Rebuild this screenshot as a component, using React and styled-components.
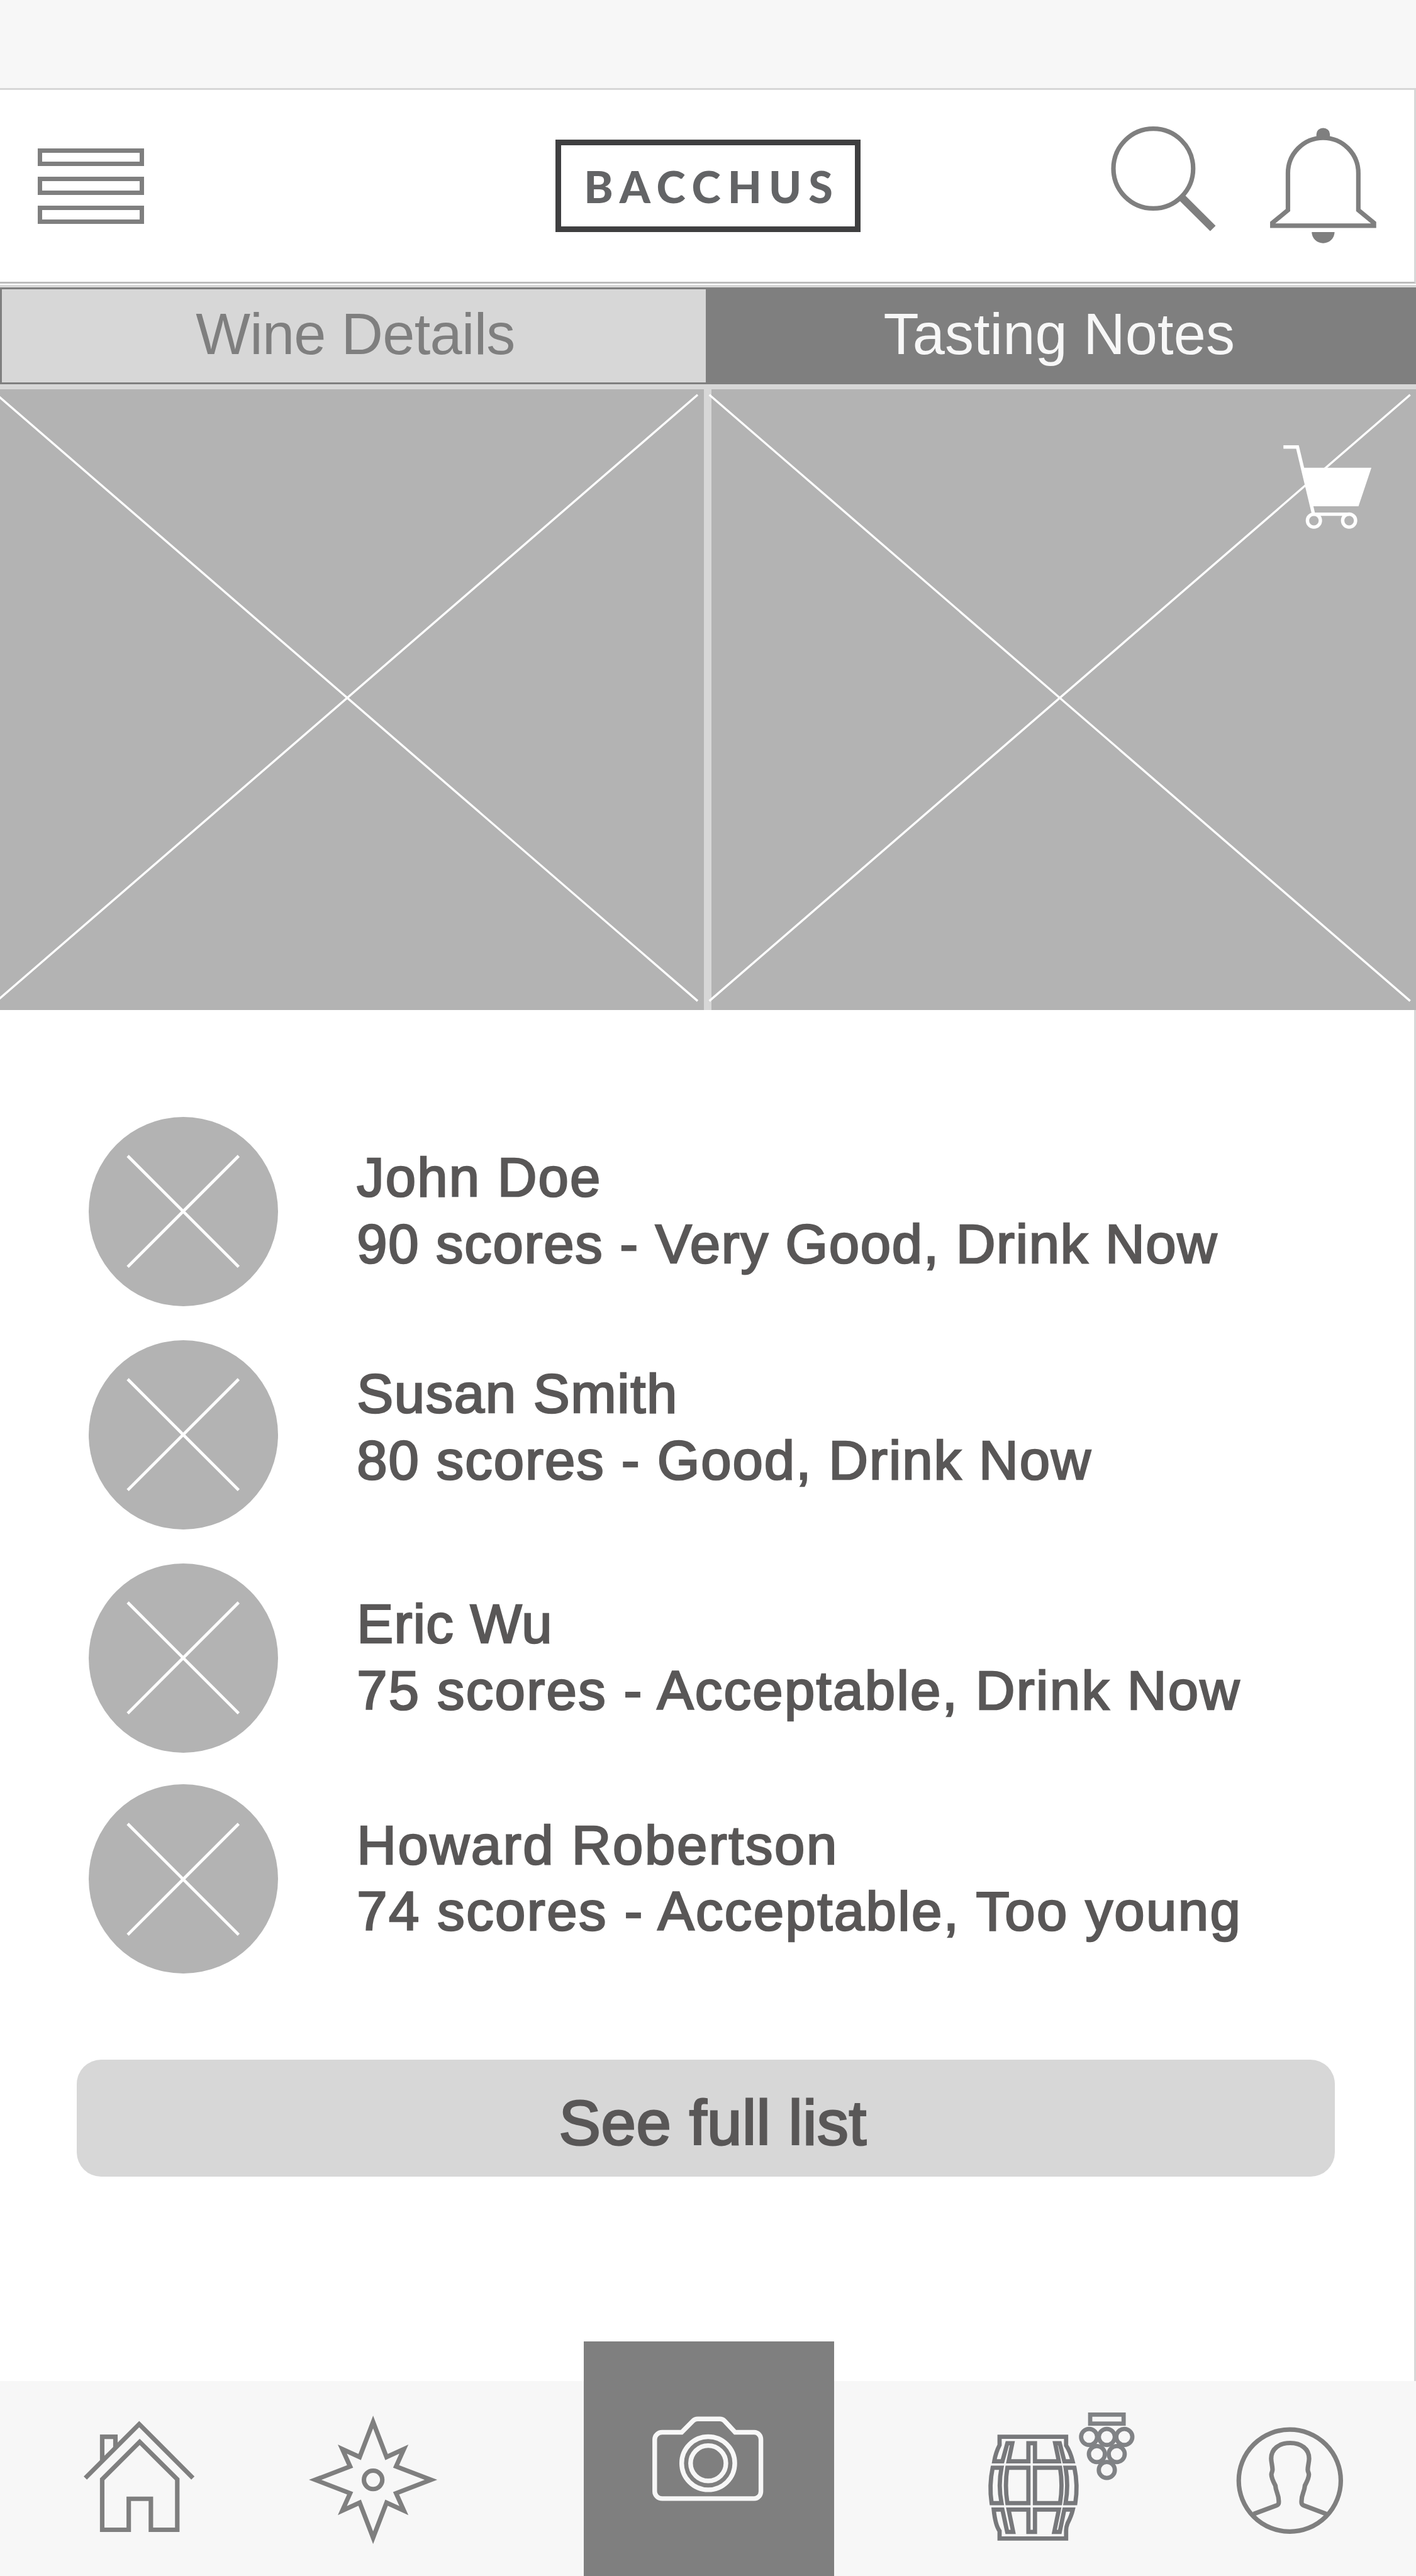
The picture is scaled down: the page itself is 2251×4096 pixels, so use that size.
import React from "react";
import styled, { createGlobalStyle } from "styled-components";

/* 1rem = 100 design units */
const GlobalStyle = createGlobalStyle`
  html {
    font-size: 84.4px;
  }
  body {
    margin: 0;
    background: #ffffff;
  }
  *, *::before, *::after {
    box-sizing: border-box;
  }
`;

const color = {
  ink: "#595757",
  mid: "#7f7f7f",
  fill: "#b3b3b3",
  light: "#d7d7d7",
  pale: "#f7f7f7",
};

const Screen = styled.div`
  display: flex;
  flex-direction: column;
  width: 100%;
  height: 4096px;
  overflow: hidden;
  background: #ffffff;
  font-family: "Liberation Sans", Arial, Helvetica, sans-serif;
`;

const StatusBar = styled.div`
  flex: none;
  height: 1.7rem;
  background: ${color.pale};
  border-bottom: 0.04rem solid ${color.light};
`;

const Header = styled.header`
  flex: none;
  display: grid;
  grid-template-columns: 1fr auto 1fr;
  align-items: center;
  height: 3.645rem;
  padding: 0 0.67rem 0 0.71rem;
  border-right: 0.04rem solid ${color.light};
  border-bottom: 0.045rem solid #bcbcbc;
`;

const Icon = styled.svg`
  display: block;
  flex: none;
  width: ${(p) => p.$w / 100}rem;
  height: ${(p) => p.$h / 100}rem;
  overflow: visible;
  fill: none;
  stroke: ${(p) => p.$stroke || color.mid};
  stroke-width: ${(p) => p.$weight || 8.5};
  stroke-miterlimit: 20;
`;

const MenuButton = styled.button`
  display: flex;
  flex-direction: column;
  gap: 0.202rem;
  width: 2rem;
  padding: 0;
  border: 0;
  background: none;
`;

const MenuBar = styled.span`
  height: 0.34rem;
  border: 0.085rem solid ${color.mid};
`;

const Logo = styled.div`
  display: flex;
  align-items: center;
  justify-content: center;
  width: 5.75rem;
  height: 1.74rem;
  padding-left: 0.14rem;
  border: 0.107rem solid #3f3f40;
  color: #636466;
  font-family: Lato, "Open Sans", sans-serif;
  font-size: 0.83rem;
  font-weight: 900;
  line-height: 1;
  letter-spacing: 0.158em;
`;

const Actions = styled.div`
  display: flex;
  justify-content: flex-end;
  gap: 1.02rem;
  margin-right: 0.045rem;
`;

const TabBar = styled.nav`
  flex: none;
  display: flex;
  height: 1.97rem;
  margin-top: 0.025rem;
  padding: 0.045rem 0 0.095rem;
  background: ${color.light};
`;

const Tab = styled.button`
  flex: ${(p) => (p.$active ? "1" : "none")};
  width: 13.29rem;
  padding: ${(p) => (p.$active ? "0 0.06rem 0.08rem 0" : "0 0 0.08rem 0.06rem")};
  border: 0.045rem solid ${color.mid};
  border-right-width: ${(p) => (p.$active ? "0.045rem" : "0")};
  background: ${(p) => (p.$active ? color.mid : color.light)};
  color: ${(p) => (p.$active ? color.pale : color.mid)};
  font-family: inherit;
  font-size: 1.09rem;
  line-height: 1.2;
  letter-spacing: ${(p) => (p.$active ? "0.001em" : "-0.008em")};
`;

const Gallery = styled.section`
  flex: none;
  display: flex;
  gap: 0.145rem;
  height: 11.685rem;
  background: ${color.light};
`;

const Tile = styled.div`
  position: relative;
  flex: ${(p) => (p.$w ? "none" : "1")};
  width: ${(p) => (p.$w ? `${p.$w}rem` : "auto")};
  background: ${color.fill};
`;

const CartButton = styled.div`
  position: absolute;
  top: 1.03rem;
  right: 0.82rem;
`;

const Main = styled.main`
  flex: 1;
  display: flex;
  flex-direction: column;
  padding-top: 2.013rem;
  border-right: 0.04rem solid ${color.light};
`;

const Review = styled.article`
  display: flex;
  align-items: flex-start;
  height: 3.57rem;
  margin: 0 0 ${(p) => p.$gap}rem 1.67rem;
`;

const Avatar = styled.div`
  display: flex;
  align-items: center;
  justify-content: center;
  width: 3.57rem;
  height: 3.57rem;
  border-radius: 50%;
  background: ${color.fill};
`;

const ReviewText = styled.div`
  padding: ${(p) => p.$lead}rem 0 0 1.48rem;
  color: ${color.ink};
  font-size: 1.03rem;
  line-height: 1.252rem;
  white-space: nowrap;
  -webkit-text-stroke: 0.03em ${color.ink};
`;

const Line = styled.p`
  margin: 0;
  letter-spacing: ${(p) => p.$track}em;
`;

const FullListButton = styled.button`
  width: 23.7rem;
  height: 2.2rem;
  margin: 0 0 0 1.445rem;
  padding: 0.19rem 0 0 0.26rem;
  border: 0;
  border-radius: 0.46rem;
  background: ${color.light};
  color: ${color.ink};
  font-family: inherit;
  font-size: 1.18rem;
  line-height: 1.2;
  letter-spacing: 0.006em;
  -webkit-text-stroke: 0.03em ${color.ink};
`;

const BottomNav = styled.nav`
  flex: none;
  display: grid;
  grid-template-columns: 5.5rem 5.5rem 4.71rem 1fr 4.7rem;
  height: 3.67rem;
  background: ${color.pale};
`;

const NavItem = styled.div`
  display: flex;
  padding-top: ${(p) => p.$top}rem;
  padding-left: ${(p) => p.$left}rem;
`;

const CameraItem = styled.div`
  display: flex;
  justify-content: center;
  height: 4.415rem;
  margin-top: -0.745rem;
  padding: 1.39rem 0.03rem 0 0;
  background: ${color.mid};
`;

const SearchIcon = () => (
  <Icon viewBox="2090 234 200 232" $w={200} $h={232}>
    <circle cx="2172.2" cy="317" r="75.1" />
    <path d="M2226 371.6L2284.5 429.8" strokeWidth="14.5" />
  </Icon>
);

const BellIcon = () => (
  <Icon viewBox="2392 234 200 232" $w={200} $h={232}>
    <path d="M2396.3 424.7V419.5L2425.7 395.2V325.5A66.3 66.3 0 0 1 2558.3 325.5V395.2L2587.7 419.5V424.7Z" />
    <path
      d="M2479.3 262V252A12.7 11.5 0 0 1 2504.7 252V262ZM2470.5 436.6H2513.5A21.5 21 0 0 1 2470.5 436.6Z"
      fill={color.mid}
      stroke="none"
    />
  </Icon>
);

const CartIcon = () => (
  <Icon viewBox="2417 837 168 162" $w={168} $h={162} $stroke="#ffffff" $weight={6.4}>
    <path d="M2417.3 842.6H2443.7L2474 969.3H2541" />
    <path d="M2455 881.8H2583L2558.7 954.3H2471.7Z" fill="#ffffff" stroke="none" />
    <circle cx="2474.7" cy="981.3" r="12.2" />
    <circle cx="2541" cy="981.3" r="12.2" />
  </Icon>
);

const TileCross = ({ x, w, from }) => (
  <Icon viewBox={`${x} 734 ${w} 1168.5`} $w={w} $h={1168.5} $stroke="#ffffff" $weight={4}>
    <path d={`M${from} 744.3L${from + 1320} 1886.4M${from} 1886.4L${from + 1320} 744.3`} />
  </Icon>
);

const AvatarCross = () => (
  <Icon viewBox="0 0 209 209" $w={209} $h={209} $stroke="#ffffff" $weight={5.6}>
    <path d="M0 0L209 209M0 209L209 0" />
  </Icon>
);

const HomeIcon = () => (
  <Icon viewBox="157 4560 210 212" $w={210} $h={212}>
    <path d="M160.1 4669.3L261.6 4567.7L362.8 4669.3" />
    <path d="M191.9 4637V4591.6H216.8V4612" />
    <path d="M191.9 4671.7L262.5 4601.2L333.3 4671.7V4766.8H283.6V4708.4H241.9V4766.8H191.9Z" />
  </Icon>
);

const CompassIcon = () => (
  <Icon viewBox="-121 -121 242 242" $w={242} $h={242}>
    <path d="M0 -109L25.3 -43L58 -58L43.3 -25.2L109 0L43.3 25.2L58 58L25.3 43L0 109L-25.3 43L-58 58L-43.3 25.2L-109 0L-43.3 -25.2L-58 -58L-25.3 -43Z" />
    <circle r="17.3" />
  </Icon>
);

const CameraIcon = () => (
  <Icon viewBox="1229 4552 210 162" $w={210} $h={162} $stroke={color.pale} $weight={8.8}>
    <path d="M1247.5 4583.4H1284.2L1305.5 4562Q1309.3 4558.3 1314.5 4558.3H1356Q1361.3 4558.3 1365 4562L1385 4583.4H1421A12.5 13.5 0 0 1 1433.5 4597V4694.8A12.5 13.5 0 0 1 1421 4708.3H1247.5A14 13.5 0 0 1 1233.5 4694.8V4597A14 13.5 0 0 1 1247.5 4583.4Z" />
    <circle cx="1334.3" cy="4641.7" r="50" />
    <circle cx="1334.3" cy="4641.7" r="33.3" />
  </Icon>
);

const CellarIcon = () => (
  <Icon viewBox="66 78 828 726" $w={276} $h={242} $stroke="#77787b" $weight={24}>
    <path d="M130 215H506V264Q530 300 543 353.5H496L470 252H444L465 353.5H330V252H293V353.5H181L202 252H174L146 353.5H100Q108 305 130 262Z" />
    <path d="M91 390H141Q121 490 141 590H85Q70 490 91 390Z" />
    <path d="M174 390H293V590H174Q158 490 174 390Z" />
    <path d="M330 390H472Q488 490 472 590H330Z" />
    <path d="M503 390H553Q574 490 558 590H503Q521 490 503 390Z" />
    <path d="M130 790H506V744Q506 725 514 705Q536 662 544 627H496L470 753H439L465 627H330V753H293V627H181L207 753H173L146 627H97Q106 715 130 748Z" />
    <g stroke="#808285">
      <rect x="642" y="90" width="189" height="51" />
      <circle cx="636" cy="216" r="45.3" />
      <circle cx="736" cy="216" r="45.3" />
      <circle cx="835" cy="216" r="45.3" />
      <circle cx="680" cy="313" r="45.3" />
      <circle cx="792" cy="313" r="45.3" />
      <circle cx="736" cy="403" r="45.3" />
    </g>
  </Icon>
);

const ProfileIcon = () => (
  <Icon viewBox="2328 4573 202 202" $w={202} $h={202}>
    <circle cx="2429.1" cy="4674" r="96.1" />
    <path d="M2361 4737L2404 4721Q2408 4719.5 2408.3 4716C2409.5 4700 2402.8 4697 2402 4683.5C2398 4676 2394.5 4668 2394.5 4662.5C2394.5 4659 2396.8 4657.5 2396.6 4653C2396.4 4646 2394.1 4639 2394.1 4632.5C2394.1 4614.5 2409 4603.2 2429.8 4603.2C2450.6 4603.2 2465.5 4614.5 2465.5 4632.5C2465.5 4639 2463.2 4646 2463 4653C2462.8 4657.5 2465.1 4659 2465.1 4662.5C2465.1 4668 2461.6 4676 2457.6 4683.5C2456.8 4697 2450.1 4700 2451.3 4716Q2451.6 4719.5 2455.6 4721L2498 4737" />
  </Icon>
);

const reviews = [
  {
    name: "John Doe",
    note: "90 scores - Very Good, Drink Now",
    track: [0.025, 0.0197],
    lead: 0.52,
    gap: 0.638,
  },
  {
    name: "Susan Smith",
    note: "80 scores - Good, Drink Now",
    track: [0.019, 0.0225],
    lead: 0.388,
    gap: 0.638,
  },
  {
    name: "Eric Wu",
    note: "75 scores - Acceptable, Drink Now",
    track: [0.015, 0.0268],
    lead: 0.515,
    gap: 0.592,
  },
  {
    name: "Howard Robertson",
    note: "74 scores - Acceptable, Too young",
    track: [0.0295, 0.0279],
    lead: 0.515,
    gap: 1.62,
  },
];

export default function App() {
  return (
    <>
      <GlobalStyle />
      <Screen>
        <StatusBar />
        <Header>
          <MenuButton aria-label="Menu">
            <MenuBar />
            <MenuBar />
            <MenuBar />
          </MenuButton>
          <Logo>BACCHUS</Logo>
          <Actions>
            <SearchIcon />
            <BellIcon />
          </Actions>
        </Header>
        <TabBar>
          <Tab>Wine Details</Tab>
          <Tab $active>Tasting Notes</Tab>
        </TabBar>
        <Gallery>
          <Tile $w={13.255}>
            <TileCross x={0} w={1325.5} from={-6} />
          </Tile>
          <Tile>
            <TileCross x={1340} w={1327} from={1336} />
            <CartButton>
              <CartIcon />
            </CartButton>
          </Tile>
        </Gallery>
        <Main>
          {reviews.map((r) => (
            <Review key={r.name} $gap={r.gap}>
              <Avatar>
                <AvatarCross />
              </Avatar>
              <ReviewText $lead={r.lead}>
                <Line $track={r.track[0]}>{r.name}</Line>
                <Line $track={r.track[1]}>{r.note}</Line>
              </ReviewText>
            </Review>
          ))}
          <FullListButton>See full list</FullListButton>
        </Main>
        <BottomNav>
          <NavItem $top={0.73} $left={1.57}>
            <HomeIcon />
          </NavItem>
          <NavItem $top={0.647} $left={0.322}>
            <CompassIcon />
          </NavItem>
          <CameraItem>
            <CameraIcon />
          </CameraItem>
          <NavItem $top={0.59} $left={2.91}>
            <CellarIcon />
          </NavItem>
          <NavItem $top={0.86} $left={1.31}>
            <ProfileIcon />
          </NavItem>
        </BottomNav>
      </Screen>
    </>
  );
}
